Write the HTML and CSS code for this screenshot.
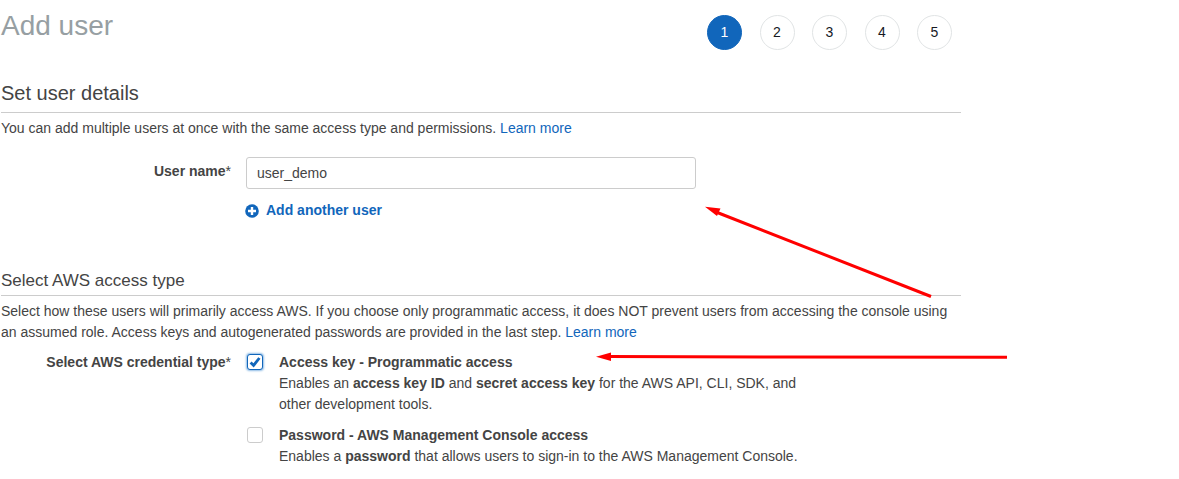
FILE: index.html
```html
<!DOCTYPE html>
<html lang="en">
<head>
<meta charset="utf-8">
<title>Add user</title>
<link rel="stylesheet" href="styles.css">
</head>
<body>
<main class="page">
  <header class="head">
    <h1 class="title">Add user</h1>
    <ol class="steps">
      <li class="step step-on">1</li>
      <li class="step">2</li>
      <li class="step">3</li>
      <li class="step">4</li>
      <li class="step">5</li>
    </ol>
  </header>

  <section class="details">
    <h2 class="sec-title">Set user details</h2>
    <p class="sec-desc">You can add multiple users at once with the same access type and permissions. <a class="link" href="#">Learn more</a></p>
    <div class="row row-name">
      <label class="row-label">User name<span class="req">*</span></label>
      <div class="row-body">
        <input class="text-input" type="text" value="user_demo">
        <a class="add-link" href="#">
          <svg class="add-icon" viewBox="0 0 14 14" aria-hidden="true"><circle cx="7" cy="7" r="6.8" fill="#1166bb"/><path d="M7 3v8M3 7h8" stroke="#fff" stroke-width="2.4" fill="none"/></svg>
          Add another user
        </a>
      </div>
    </div>
  </section>

  <section class="access">
    <h2 class="sec-title sec-title-small">Select AWS access type</h2>
    <p class="sec-desc sec-desc-wide">Select how these users will primarily access AWS. If you choose only programmatic access, it does NOT prevent users from accessing the console using an assumed role. Access keys and autogenerated passwords are provided in the last step. <a class="link" href="#">Learn more</a></p>
    <div class="row row-cred">
      <label class="row-label">Select AWS credential type<span class="req">*</span></label>
      <div class="row-body options">
        <div class="option">
          <span class="check check-on">
            <svg viewBox="0 0 14 14" aria-hidden="true"><path d="M2.600 7.400l3 3 5.800-7.400" stroke="#1166bb" stroke-width="2.800" fill="none"/></svg>
          </span>
          <div class="opt-text">
            <div class="opt-title">Access key - Programmatic access</div>
            <div class="opt-desc">Enables an <b>access key ID</b> and <b>secret access key</b> for the AWS API, CLI, SDK, and other development tools.</div>
          </div>
        </div>
        <div class="option">
          <span class="check"></span>
          <div class="opt-text">
            <div class="opt-title">Password - AWS Management Console access</div>
            <div class="opt-desc opt-desc-wide">Enables a <b>password</b> that allows users to sign-in to the AWS Management Console.</div>
          </div>
        </div>
      </div>
    </div>
  </section>
</main>

<svg class="arrows" viewBox="0 0 1179 479" aria-hidden="true">
  <path d="M931 296.500L716 212" stroke="#ff0000" stroke-width="3" fill="none"/>
  <path d="M705 206.700L720.500 208.500L717 216Z" fill="#ff0000"/>
  <path d="M608 356.500L790 357L1007 357.300" stroke="#ff0000" stroke-width="3" fill="none"/>
  <path d="M596 356.700L611 352.500L611 361Z" fill="#ff0000"/>
</svg>
</body>
</html>
```

FILE: styles.css
```css
* { box-sizing: border-box; }
html, body { margin: 0; padding: 0; background: #fff; }
body {
  font-family: "Liberation Sans", Arial, sans-serif;
  font-size: 14px;
  line-height: 21px;
  color: #444;
  height: 479px;
  overflow: hidden;
}
.page { width: 961px; padding-left: 1px; }
.head { display: flex; justify-content: space-between; align-items: flex-start; height: 81px; padding-right: 9px; }
.title { margin: 8px 0 0; font-size: 28px; line-height: 36px; font-weight: 400; color: #979fa3; }
.steps { display: flex; gap: 17.500px; list-style: none; margin: 15px 0 0; padding: 0; }
.step {
  width: 35px; height: 35px; border-radius: 50%;
  border: 1px solid #e1e4e5;
  display: flex; align-items: center; justify-content: center;
  font-size: 14px; color: #16191f; background: #fff;
}
.step-on { background: #1166bb; border-color: #1166bb; color: #fff; }
.sec-title { margin: 0; padding: 0; font-size: 20px; line-height: 24px; font-weight: 400; color: #444; border-bottom: 1px solid #ccc; height: 32px; }
.sec-title-small { font-size: 17px; line-height: 24px; height: 27px; }
.sec-desc { margin: 5px 0 0; }
.link { color: #1166bb; text-decoration: none; }
.row { display: flex; }
.row-label { width: 245px; padding-right: 15px; text-align: right; font-weight: 700; flex: none; }
.req { font-weight: 400; }
.row-name { margin-top: 18px; }
.row-name .row-label { padding-top: 4px; }
.text-input {
  display: block; width: 450px; height: 32px;
  border: 1px solid #ccc; border-radius: 3px;
  padding: 0 10px; font: 14px "Liberation Sans", Arial, sans-serif; color: #444;
}
.add-link { display: flex; align-items: center; gap: 7px; margin: 11px 0 0 -1px; color: #1166bb; font-weight: 700; text-decoration: none; }
.add-icon { width: 14px; height: 14px; }
.access { margin-top: 48px; }
.row-cred { margin-top: 9px; }
.options { padding-left: 1px; }
.option { display: flex; gap: 16px; margin-bottom: 10px; }
.check {
  flex: none; width: 16px; height: 16px; margin-top: 2px; border: 1px solid #ccc; border-radius: 3px; background: #fff;
  display: flex; align-items: center; justify-content: center;
}
.check svg { width: 14px; height: 14px; }
.check-on { border-color: #1166bb; box-shadow: 0 0 2px 1px #8fbce6; }
.opt-title { font-weight: 700; }
.opt-desc { width: 530px; }
.opt-desc-wide { width: 540px; }
.arrows { position: absolute; left: 0; top: 0; width: 1179px; height: 479px; pointer-events: none; }
```
